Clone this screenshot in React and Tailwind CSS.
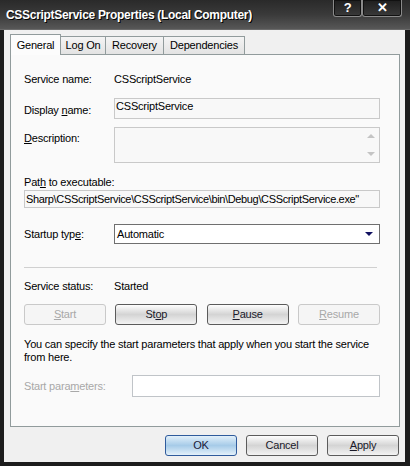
const FONT = { fontFamily: '"Liberation Sans", Arial, sans-serif' };

function U({ children }) {
  return <span className="underline underline-offset-[1px]">{children}</span>;
}

function PushButton({ children, disabled, primary, w = 'w-[82px]' }) {
  let cls = 'border-[#5b5b5b] bg-gradient-to-b from-[#fefefe] via-[#d4d4d4] to-[#f3f3f3] text-[#1a1a2a]';
  if (disabled) cls = 'border-[#c9c9c9] bg-[#f5f5f5] text-[#a8a8a8]';
  if (primary) cls = 'border-[#2f5b9c] bg-gradient-to-b from-[#e2f0fa] via-[#a6cbe8] to-[#e4f1fa] text-[#1a1a3a]';
  return (
    <div className={`${w} h-[21px] rounded-[3px] border flex items-center justify-center text-[11px] ${cls}`}>
      <span>{children}</span>
    </div>
  );
}

function TitleButton({ children, w }) {
  return (
    <div className={`${w} h-[17px] border border-t-0 border-[#8a8a8a] rounded-b-[3px] bg-gradient-to-b from-[#1e1e1e] to-[#3a3a3a] flex items-center justify-center text-white font-bold text-[13px] shadow-[inset_0_0_0_1px_#111]`}>
      {children}
    </div>
  );
}

function Tab({ label, selected, w }) {
  if (selected) {
    return (
      <div className={`${w} h-[21px] bg-[#fcfcfc] border border-b-0 border-[#919b9c] flex items-center justify-center text-[11px] relative z-10 -mb-px`}>
        {label}
      </div>
    );
  }
  return (
    <div className={`${w} h-[18px] bg-gradient-to-b from-[#f4f4f4] to-[#e3e3e3] border border-l-0 border-b-0 border-[#919b9c] flex items-center justify-center text-[11px]`}>
      {label}
    </div>
  );
}

export default function App() {
  return (
    <div className="w-[410px] h-[466px] bg-[#1c1c1c] flex flex-col text-black tracking-[-0.2px]" style={FONT}>
      {/* Title bar */}
      <div className="h-[30px] flex justify-between bg-gradient-to-b from-[#2a2a2a] via-[#3a3a3a] to-[#575757] border-b border-[#6a6a6a]">
        <div className="self-center pl-[6px] pt-[1px] text-white font-bold text-[12px] tracking-[-0.3px] [text-shadow:1px_1px_0_#000]">
          CSScriptService Properties (Local Computer)
        </div>
        <div className="flex pr-[8px]">
          <TitleButton w="w-[29px]">?</TitleButton>
          <TitleButton w="w-[40px]">✕</TitleButton>
        </div>
      </div>

      {/* Body */}
      <div className="flex-1 mb-[4px] ml-[4px] mr-[5px] bg-[#f0f0f0] flex flex-col pl-[6px] pr-[5px]">
        <div className="flex items-end pt-[3px] h-[24px]">
          <Tab label="General" selected w="w-[51px]" />
          <Tab label="Log On" w="w-[45px]" />
          <Tab label="Recovery" w="w-[58px]" />
          <Tab label="Dependencies" w="w-[81px]" />
        </div>

        <div className="h-[373px] bg-[#fafafa] border border-[#919b9c] pl-[13px] pr-[19px] flex flex-col text-[11px]">
          <div className="mt-[17px] h-[14px] flex items-center">
            <div className="w-[90px]">Service name:</div>
            <div>CSScriptService</div>
          </div>

          <div className="mt-[12px] flex">
            <div className="w-[90px] pt-[4px]">Display <U>n</U>ame:</div>
            <div className="flex-1 h-[21px] border border-[#c9c9c9] bg-[#f8f8f8] px-[1px] leading-[14px]">CSScriptService</div>
          </div>

          <div className="mt-[8px] flex">
            <div className="w-[90px] pt-[3px]"><U>D</U>escription:</div>
            <div className="flex-1 h-[36px] border border-[#c9c9c9] bg-[#f8f8f8] flex justify-end">
              <div className="w-[16px] flex flex-col items-center justify-between py-[6px]">
                <div className="w-0 h-0 border-x-[4px] border-x-transparent border-b-[4px] border-b-[#c4c4c4]" />
                <div className="w-0 h-0 border-x-[4px] border-x-transparent border-t-[4px] border-t-[#c4c4c4]" />
              </div>
            </div>
          </div>

          <div className="mt-[12px] h-[14px] leading-[14px]">Pat<U>h</U> to executable:</div>
          <div className="mt-[1px] h-[18px] border border-[#c9c9c9] bg-[#f8f8f8] flex items-center overflow-hidden whitespace-nowrap pl-[1px]">
            <span className="tracking-[-0.35px]">Sharp\CSScriptService\CSScriptService\bin\Debug\CSScriptService.exe"</span>
          </div>

          <div className="mt-[16px] flex items-center">
            <div className="w-[90px]">Startup typ<U>e</U>:</div>
            <div className="flex-1 h-[20px] border border-[#6f6f6f] bg-white flex items-center justify-between pl-[2px] pr-[6px]">
              <span>Automatic</span>
              <div className="w-0 h-0 border-x-[4px] border-x-transparent border-t-[4px] border-t-[#101060]" />
            </div>
          </div>

          <div className="mt-[23px] h-px bg-[#d0d0d0] mr-[3px]" />

          <div className="mt-[11px] h-[14px] flex items-center">
            <div className="w-[90px]">Service status:</div>
            <div>Started</div>
          </div>

          <div className="mt-[11px] flex justify-between">
            <PushButton disabled><U>S</U>tart</PushButton>
            <PushButton>St<U>o</U>p</PushButton>
            <PushButton><U>P</U>ause</PushButton>
            <PushButton disabled><U>R</U>esume</PushButton>
          </div>

          <div className="mt-[13px] leading-[13px] whitespace-nowrap">
            You can specify the start parameters that apply when you start the service
            <br />
            from here.
          </div>

          <div className="mt-[11px] flex items-center">
            <div className="w-[108px] text-[#a8a8a8]">Start para<U>m</U>eters:</div>
            <div className="flex-1 h-[22px] border border-[#c0c4c8] bg-white" />
          </div>
        </div>

        <div className="mt-[8px] flex justify-end gap-[9px] pr-[1px]">
          <PushButton primary w="w-[72px]">OK</PushButton>
          <PushButton w="w-[72px]">Cancel</PushButton>
          <PushButton w="w-[72px]"><U>A</U>pply</PushButton>
        </div>
      </div>
    </div>
  );
}
